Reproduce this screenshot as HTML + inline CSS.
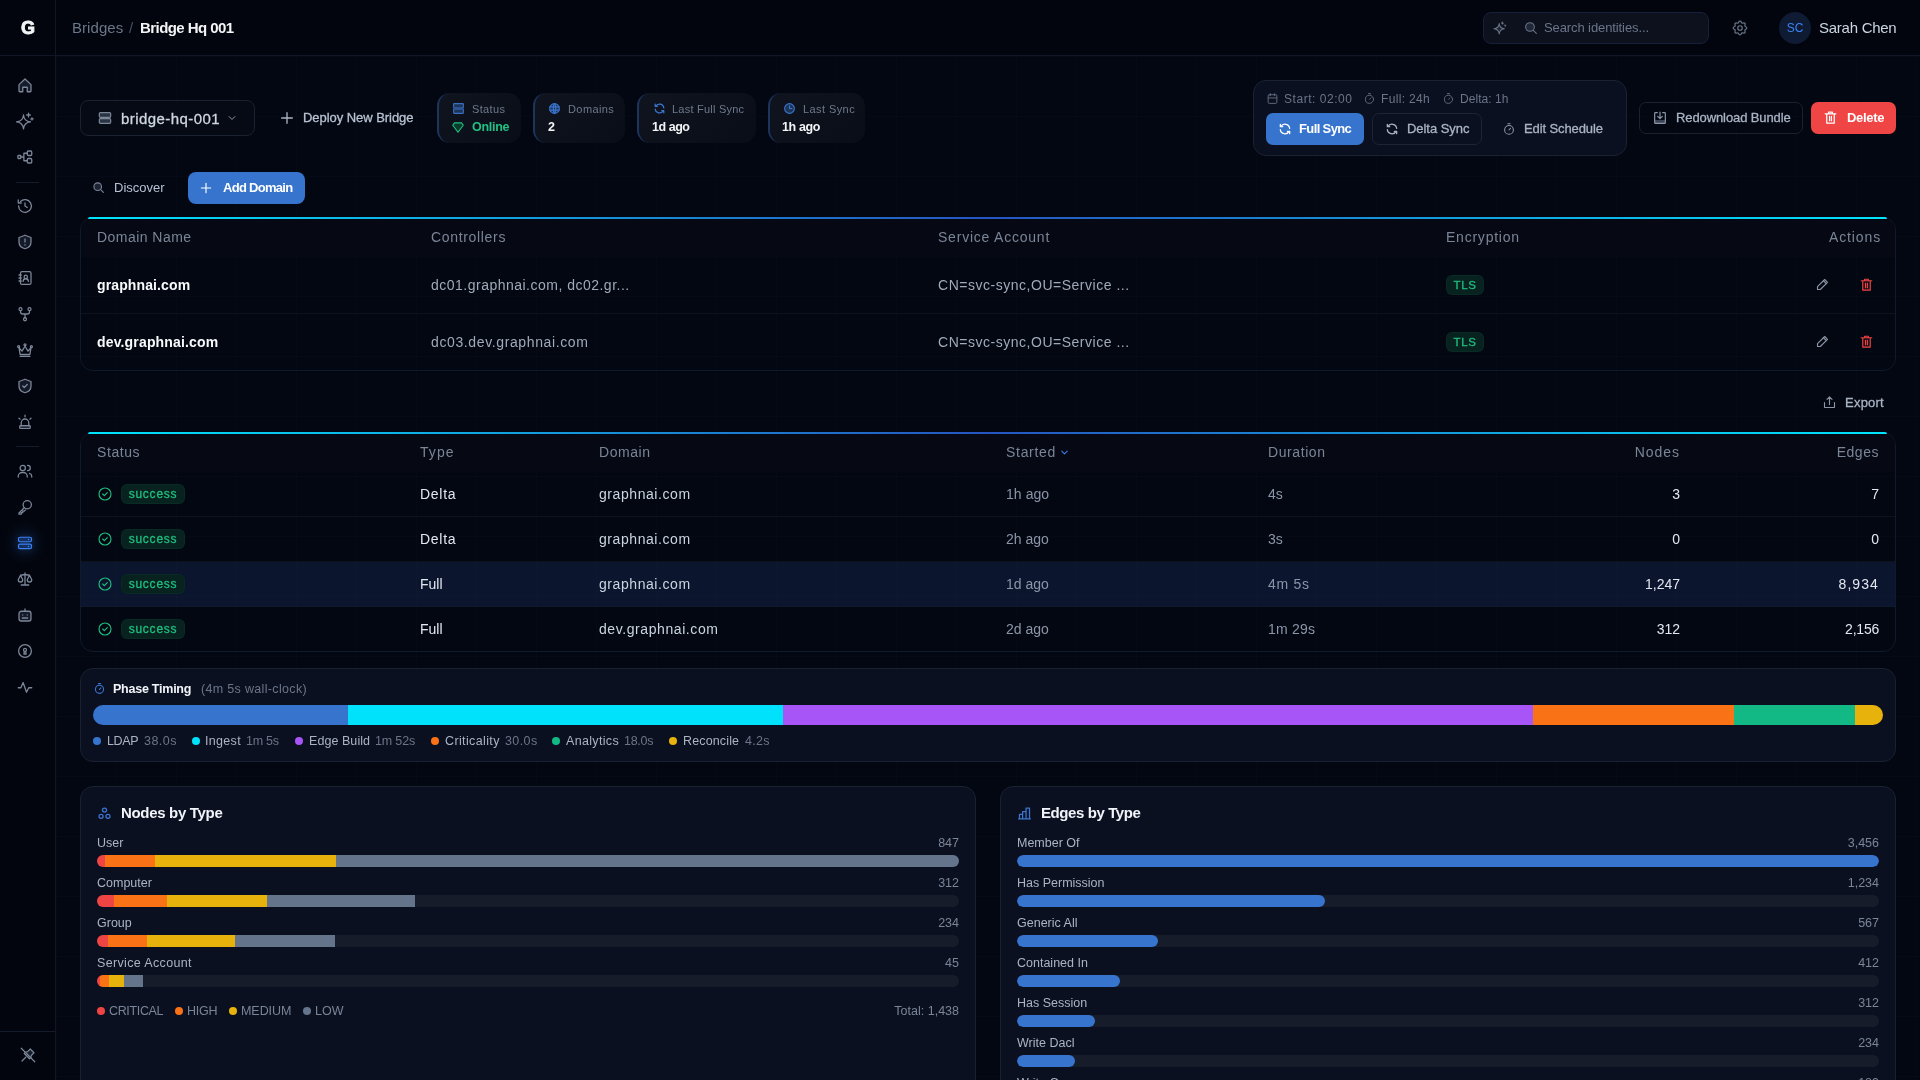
<!DOCTYPE html>
<html><head><meta charset="utf-8">
<style>
*{box-sizing:border-box;margin:0;padding:0}
html,body{width:1920px;height:1080px;overflow:hidden}
body{background:#030712;font-family:"Liberation Sans",sans-serif;color:#e5e7eb;position:relative}
.grid{position:absolute;left:56px;top:56px;right:0;bottom:0;
background-image:linear-gradient(to right,rgba(148,163,184,0.022) 1px,transparent 1px),linear-gradient(to bottom,rgba(148,163,184,0.022) 1px,transparent 1px);
background-size:60px 60px;background-position:0 0}
.side{position:absolute;left:0;top:0;width:56px;height:1080px;background:#02050d;border-right:1px solid #101625}
.hdr{position:absolute;left:56px;top:0;right:0;height:56px;border-bottom:1px solid #101625;background:#02050d}
svg{position:absolute;overflow:visible}
.si{width:18px;height:18px;fill:none;stroke:#7c879a;stroke-width:1.7;stroke-linecap:round;stroke-linejoin:round}
.t{position:absolute;white-space:nowrap;line-height:1}
.box{position:absolute}

.stat{top:93px;height:50px;border-radius:13px;background:linear-gradient(135deg,#10141f,#090d17);border-left:2px solid #1c355c}
.card{border-radius:13px;background:transparent;border:1px solid #0f1a2d}
.thbg{border-radius:12px 12px 0 0;background:#060913}
.topline{height:2px;border-radius:2px 2px 0 0;background:linear-gradient(90deg,#00e5fc,#2755c0 50%,#00e5fc)}
.th{font-size:14px;color:#7a8598}
.td{font-size:14px;color:#a0aab9}
.badge{border-radius:6px;background:#08221f;box-shadow:inset 0 0 0 1px rgba(16,185,129,0.06)}
.m{-webkit-text-stroke:0.3px currentColor}
</style></head><body><div id="root" style="position:absolute;left:0;top:0;width:1920px;height:1080px;overflow:hidden;will-change:transform">
<div class="grid"></div>
<div class="side"></div>
<div class="hdr"></div>
<div class="box" style="left:0;top:55px;width:56px;height:1px;background:#101625"></div>
<!-- logo -->
<div class="t" style="left:21px;top:19px;font-size:18px;font-weight:bold;color:#f3f4f6;-webkit-text-stroke:0.9px #f3f4f6">G</div>
<!-- sidebar icons -->
<svg class="si" style="left:16px;top:76px" viewBox="0 0 24 24"><path d="M4 11.5L12 4l8 7.5V20a1 1 0 0 1-1 1h-4v-6h-6v6H5a1 1 0 0 1-1-1z" fill="#161c2a"/></svg>
<svg class="si" style="left:16px;top:112px" viewBox="0 0 24 24"><path d="M10 4Q10.8 12.5 19.3 13.3Q10.8 14.1 10 22.6Q9.2 14.1 0.7 13.3Q9.2 12.5 10 4z"/><path d="M16.7 1.5v5M14.2 4h5M21.3 7.8v3M19.8 9.3h3"/></svg>
<svg class="si" style="left:16px;top:148px" viewBox="0 0 24 24"><rect x="2.5" y="10" width="4" height="4" rx="1"/><rect x="15" y="4" width="6" height="6" rx="1.5"/><rect x="15" y="14" width="6" height="6" rx="1.5"/><path d="M6.5 12h4M10.5 7v10M10.5 7h4.5M10.5 17h4.5"/></svg>
<div class="box" style="left:16px;top:182px;width:23px;height:1px;background:#141b2a"></div>
<svg class="si" style="left:16px;top:197px" viewBox="0 0 24 24"><path d="M3.5 12a8.5 8.5 0 1 0 2.5-6"/><path d="M3 4v4h4"/><path d="M12 8v4l3 2"/></svg>
<svg class="si" style="left:16px;top:233px" viewBox="0 0 24 24"><path d="M12 3l8 3v6c0 5-3.5 8-8 9-4.5-1-8-4-8-9V6z" fill="#141a28"/><path d="M12 8v4M12 15.5v.5"/></svg>
<svg class="si" style="left:16px;top:269px" viewBox="0 0 24 24"><rect x="6" y="3.5" width="14" height="17" rx="2"/><circle cx="13" cy="10.5" r="2.2"/><path d="M9.5 16.5a3.5 3.5 0 0 1 7 0M4 8h3M4 12h3M4 16h3"/></svg>
<svg class="si" style="left:16px;top:305px" viewBox="0 0 24 24"><circle cx="6" cy="5.5" r="2"/><circle cx="18" cy="5.5" r="2"/><circle cx="12" cy="19" r="2"/><path d="M6 7.5v1.5a3 3 0 0 0 3 3h6a3 3 0 0 0 3-3V7.5M12 12v5"/></svg>
<svg class="si" style="left:16px;top:341px" viewBox="0 0 24 24"><path d="M4 9l4 4.5 4-6.5 4 6.5 4-4.5-1.5 9h-13z"/><circle cx="12" cy="5" r="1.3"/><circle cx="3.5" cy="7.5" r="1.3"/><circle cx="20.5" cy="7.5" r="1.3"/><path d="M5.5 20.5h13"/></svg>
<svg class="si" style="left:16px;top:377px" viewBox="0 0 24 24"><path d="M12 3l8 3v6c0 5-3.5 8-8 9-4.5-1-8-4-8-9V6z" fill="#141a28"/><path d="M9 12l2 2 4-4"/></svg>
<svg class="si" style="left:16px;top:413px" viewBox="0 0 24 24"><path d="M7 17v-4a5 5 0 0 1 10 0v4"/><rect x="5" y="17" width="14" height="3.5" rx="1"/><path d="M12 3v2M4 7l1.5 1.2M20 7l-1.5 1.2"/></svg>
<div class="box" style="left:16px;top:446px;width:23px;height:1px;background:#141b2a"></div>
<svg class="si" style="left:16px;top:462px" viewBox="0 0 24 24"><circle cx="9" cy="8" r="3.5"/><path d="M3 20v-1a5 5 0 0 1 5-5h2a5 5 0 0 1 5 5v1M15.5 4.5a3.5 3.5 0 0 1 0 7M21 20v-1a4 4 0 0 0-3-3.8"/></svg>
<svg class="si" style="left:16px;top:498px" viewBox="0 0 24 24"><circle cx="15" cy="9" r="5.5"/><path d="M11 13l-7 7v1.5h3v-2h2v-2h2l1.5-1.5"/></svg>
<div class="box" style="left:3px;top:521px;width:44px;height:44px;border-radius:50%;background:radial-gradient(circle,rgba(59,130,246,0.10) 0%,rgba(59,130,246,0.04) 45%,transparent 70%)"></div>
<svg class="si" style="left:16px;top:534px;stroke:#3b82f6;stroke-width:1.6;filter:drop-shadow(0 0 5px rgba(59,130,246,.45))" viewBox="0 0 24 24"><rect x="3.3" y="4.3" width="17.4" height="6" rx="2.2" fill="rgba(59,130,246,.18)"/><rect x="3.3" y="13.6" width="17.4" height="6" rx="2.2" fill="rgba(59,130,246,.18)"/><path d="M16.7 7.3h.01M16.7 16.6h.01" stroke-width="2.2"/></svg>
<svg class="si" style="left:16px;top:570px" viewBox="0 0 24 24"><path d="M7 20h10M6 7l6-1 6 1M12 4v16M9 13l-3-6-3 6a3 3 0 0 0 6 0M21 13l-3-6-3 6a3 3 0 0 0 6 0"/></svg>
<svg class="si" style="left:16px;top:606px" viewBox="0 0 24 24"><rect x="4" y="7" width="16" height="13" rx="3" fill="#141a28"/><path d="M12 4v3M9 12v.01M15 12v.01M8.5 16h7"/></svg>
<svg class="si" style="left:16px;top:642px" viewBox="0 0 24 24"><circle cx="12" cy="12" r="8.5"/><circle cx="12" cy="10.5" r="2"/><path d="M11.2 12.5l-.7 3.5h3l-.7-3.5"/></svg>
<svg class="si" style="left:16px;top:678px" viewBox="0 0 24 24"><path d="M3 13h3.5l3-7 4.5 13 3-6H21"/></svg>
<div class="box" style="left:0;top:1031px;width:55px;height:1px;background:#141b2a"></div>
<svg class="si" style="left:19px;top:1046px;width:18px;height:18px;stroke-width:1.6" viewBox="0 0 24 24"><path d="M15 4l5 5-3.5 3.5-.8 2.8-1.7 1.7-7-7 1.7-1.7 2.8-.8z" fill="#161d2b"/><path d="M3 3l18 18M9 15l-5 5"/></svg>
<!-- breadcrumb -->
<div class="t" style="left:72px;top:19.5px;font-size:15px;color:#6b778a;letter-spacing:0.06px">Bridges</div>
<div class="t" style="left:129px;top:19.5px;font-size:15px;color:#475163">/</div>
<div class="t" style="left:140px;top:19.5px;font-size:15px;color:#f3f4f6;font-weight:bold;letter-spacing:-0.56px">Bridge Hq 001</div>
<!-- search -->
<div class="box" style="left:1483px;top:12px;width:226px;height:32px;border-radius:8px;background:#0c111d;border:1px solid #15213a"></div>
<svg class="si" style="left:1492px;top:20px;width:16px;height:16px;stroke:#6b7588;stroke-width:1.6" viewBox="0 0 24 24"><path d="M10.8 5.4Q11.6 12.4 18.6 13.2Q11.6 14 10.8 21Q10 14 3 13.2Q10 12.4 10.8 5.4z" fill="#1e2634"/><path d="M15.75 3l1.3 1.8-1.3 1.8-1.3-1.8zM19.8 7.3l1 1.3-1 1.3-1-1.3z" fill="#6b7588" stroke-width="1"/></svg>
<svg class="si" style="left:1523px;top:20px;width:16px;height:16px;stroke:#6b7588;stroke-width:1.6" viewBox="0 0 24 24"><circle cx="10.5" cy="10.5" r="6.5" fill="#1f2836"/><path d="M15.5 15.5L20 20"/></svg>
<div class="t" style="left:1544px;top:20.5px;font-size:13px;color:#6b7588;letter-spacing:-0.10px">Search identities...</div>
<svg class="si" style="left:1731px;top:19px;width:18px;height:18px;stroke:#6b7588;stroke-width:1.6" viewBox="0 0 24 24"><path d="M10.3 4.3c.4-1.8 3-1.8 3.4 0a1.7 1.7 0 0 0 2.6 1.1c1.5-.9 3.3.8 2.4 2.4a1.7 1.7 0 0 0 1 2.5c1.8.4 1.8 3 0 3.4a1.7 1.7 0 0 0-1 2.6c.9 1.5-.9 3.3-2.4 2.4a1.7 1.7 0 0 0-2.6 1c-.4 1.8-3 1.8-3.4 0a1.7 1.7 0 0 0-2.5-1c-1.6.9-3.3-.9-2.4-2.4a1.7 1.7 0 0 0-1.1-2.6c-1.8-.4-1.8-3 0-3.4a1.7 1.7 0 0 0 1.1-2.5c-.9-1.6.8-3.3 2.4-2.4a1.7 1.7 0 0 0 2.5-1.1z"/><circle cx="12" cy="12" r="3"/></svg>
<div class="box" style="left:1779px;top:12px;width:32px;height:32px;border-radius:50%;background:#0e1b33"></div>
<div class="t" style="left:1779px;top:22px;width:32px;text-align:center;font-size:12px;color:#3b82f6">SC</div>
<div class="t" style="left:1819px;top:19.5px;font-size:15px;color:#cbd5e1;letter-spacing:-0.26px">Sarah Chen</div>

<!-- toolbar -->
<div class="box" style="left:80px;top:100px;width:175px;height:36px;border-radius:8px;border:1px solid #1a2130;background:#060a14"></div>
<svg class="si" style="left:97px;top:110px;width:16px;height:16px;stroke:#7c879a;stroke-width:1.8" viewBox="0 0 24 24"><rect x="3.5" y="4" width="17" height="7" rx="1.5" fill="#2a3344"/><rect x="3.5" y="13" width="17" height="7" rx="1.5" fill="#2a3344"/></svg>
<div class="t m" style="left:121px;top:110.5px;font-size:15px;color:#cfd6e2;;letter-spacing:0.44px">bridge-hq-001</div>
<svg class="si" style="left:226px;top:112px;width:12px;height:12px;stroke:#8b95a7;stroke-width:2" viewBox="0 0 24 24"><path d="M6 9l6 6 6-6"/></svg>
<svg class="si" style="left:279px;top:110px;width:16px;height:16px;stroke:#aab4c4;stroke-width:2" viewBox="0 0 24 24"><path d="M12 4v16M4 12h16"/></svg>
<div class="t m" style="left:303px;top:110.8px;font-size:13px;color:#b8c2d2;;letter-spacing:-0.05px">Deploy New Bridge</div>

<!-- stat cards -->
<div class="box stat" style="left:437px;width:84px"></div>
<div class="box stat" style="left:533px;width:92px"></div>
<div class="box stat" style="left:637px;width:119px"></div>
<div class="box stat" style="left:768px;width:97px"></div>
<svg class="si" style="left:452px;top:102px;width:13px;height:13px;stroke:#3b6fc4;stroke-width:2" viewBox="0 0 24 24"><rect x="3" y="3" width="18" height="8" rx="1" fill="#1d3558"/><rect x="3" y="13" width="18" height="8" rx="1" fill="#1d3558"/></svg>
<div class="t" style="left:472px;top:103.5px;font-size:11px;color:#6e798c;letter-spacing:0.34px">Status</div>
<svg class="si" style="left:451px;top:120px;width:14px;height:14px;stroke:#1fbf7f;stroke-width:2" viewBox="0 0 24 24"><path d="M3 9l9 12 9-12-3-4H6z" fill="#0c3a2c"/></svg>
<div class="t" style="left:472px;top:120.5px;font-size:12.5px;color:#22c083;font-weight:bold;letter-spacing:-0.28px">Online</div>
<svg class="si" style="left:548px;top:102px;width:13px;height:13px;stroke:#3b75d0;stroke-width:2" viewBox="0 0 24 24"><circle cx="12" cy="12" r="9" fill="#1d3558"/><path d="M3.5 9h17M3.5 15h17M12 3c-3 3-3 15 0 18M12 3c3 3 3 15 0 18"/></svg>
<div class="t" style="left:568px;top:103.5px;font-size:11px;color:#6e798c;letter-spacing:0.41px">Domains</div>
<div class="t" style="left:548px;top:120.5px;font-size:12.5px;color:#f3f4f6;font-weight:bold">2</div>
<svg class="si" style="left:653px;top:102px;width:13px;height:13px;stroke:#3b75d0;stroke-width:2.2" viewBox="0 0 24 24"><path d="M20 11A8 8 0 0 0 5 8M4 4v4h4M4 13a8 8 0 0 0 15 3M20 20v-4h-4"/></svg>
<div class="t" style="left:672px;top:103.5px;font-size:11px;color:#6e798c;letter-spacing:0.23px">Last Full Sync</div>
<div class="t" style="left:652px;top:120.5px;font-size:12.5px;color:#f3f4f6;font-weight:bold;letter-spacing:-0.46px">1d ago</div>
<svg class="si" style="left:783px;top:102px;width:13px;height:13px;stroke:#3b75d0;stroke-width:2" viewBox="0 0 24 24"><circle cx="12" cy="12" r="9" fill="#1d3558"/><path d="M12 7v5h4"/></svg>
<div class="t" style="left:803px;top:103.5px;font-size:11px;color:#6e798c;letter-spacing:0.42px">Last Sync</div>
<div class="t" style="left:782px;top:120.5px;font-size:12.5px;color:#f3f4f6;font-weight:bold;letter-spacing:-0.36px">1h ago</div>

<!-- schedule box -->
<div class="box" style="left:1253px;top:80px;width:374px;height:76px;border-radius:13px;background:#0b1020;border:1px solid #1b2232"></div>
<svg class="si" style="left:1266px;top:92px;width:13px;height:13px;stroke:#5f6a7d;stroke-width:1.8" viewBox="0 0 24 24"><rect x="4" y="5" width="16" height="16" rx="2"/><path d="M16 3v4M8 3v4M4 11h16"/></svg>
<div class="t" style="left:1284px;top:93px;font-size:12px;color:#6b7588;letter-spacing:0.54px">Start: 02:00</div>
<svg class="si" style="left:1363px;top:92px;width:13px;height:13px;stroke:#5f6a7d;stroke-width:1.8" viewBox="0 0 24 24"><circle cx="12" cy="13.5" r="7.5"/><path d="M12 13.5l2.5-2.5M10 3h4"/></svg>
<div class="t" style="left:1381px;top:93px;font-size:12px;color:#6b7588;letter-spacing:0.33px">Full: 24h</div>
<svg class="si" style="left:1442px;top:92px;width:13px;height:13px;stroke:#5f6a7d;stroke-width:1.8" viewBox="0 0 24 24"><circle cx="12" cy="13.5" r="7.5"/><path d="M12 13.5l2.5-2.5M10 3h4"/></svg>
<div class="t" style="left:1460px;top:93px;font-size:12px;color:#6b7588;letter-spacing:0.04px">Delta: 1h</div>
<div class="box" style="left:1266px;top:113px;width:98px;height:32px;border-radius:7px;background:#3674cd"></div>
<svg class="si" style="left:1278px;top:122px;width:14px;height:14px;stroke:#fff;stroke-width:2.2" viewBox="0 0 24 24"><path d="M20 11A8 8 0 0 0 5 8M4 4v4h4M4 13a8 8 0 0 0 15 3M20 20v-4h-4"/></svg>
<div class="t" style="left:1299px;top:121.5px;font-size:13px;color:#fff;font-weight:bold;letter-spacing:-0.62px">Full Sync</div>
<div class="box" style="left:1372px;top:113px;width:110px;height:32px;border-radius:7px;border:1px solid #1d2434"></div>
<svg class="si" style="left:1385px;top:122px;width:14px;height:14px;stroke:#aab4c4;stroke-width:2.2" viewBox="0 0 24 24"><path d="M20 11A8 8 0 0 0 5 8M4 4v4h4M4 13a8 8 0 0 0 15 3M20 20v-4h-4"/></svg>
<div class="t m" style="left:1407px;top:121.5px;font-size:13px;color:#aab4c4;;letter-spacing:-0.05px">Delta Sync</div>
<svg class="si" style="left:1502px;top:122px;width:14px;height:14px;stroke:#8b95a7;stroke-width:1.8" viewBox="0 0 24 24"><circle cx="12" cy="13.5" r="7.5"/><path d="M12 13.5l2.5-2.5M10 3h4"/></svg>
<div class="t m" style="left:1524px;top:121.5px;font-size:13px;color:#aab4c4;;letter-spacing:-0.10px">Edit Schedule</div>
<!-- redownload / delete -->
<div class="box" style="left:1639px;top:102px;width:164px;height:32px;border-radius:7px;border:1px solid #1a2130"></div>
<svg class="si" style="left:1652px;top:110px;width:16px;height:16px;stroke:#8b95a7;stroke-width:1.8" viewBox="0 0 24 24"><rect x="4" y="15" width="16" height="5" fill="#3a4456" stroke="none"/><path d="M8 4H5a1 1 0 0 0-1 1v14a1 1 0 0 0 1 1h14a1 1 0 0 0 1-1V5a1 1 0 0 0-1-1h-3M12 3v10M8.5 9.5L12 13l3.5-3.5"/></svg>
<div class="t m" style="left:1676px;top:110.5px;font-size:13px;color:#aab4c4;;letter-spacing:-0.10px">Redownload Bundle</div>
<div class="box" style="left:1811px;top:102px;width:85px;height:32px;border-radius:7px;background:#ef4545"></div>
<svg class="si" style="left:1823px;top:110px;width:15px;height:15px;stroke:#fff;stroke-width:2" viewBox="0 0 24 24"><path d="M3.5 6h17M6 6v15h12V6M9 6V3.5h6V6M10.5 10v7M13.5 10v7" fill="rgba(239,68,68,0.12)"/></svg>
<div class="t" style="left:1847px;top:110.5px;font-size:13px;color:#fff;font-weight:bold;letter-spacing:-0.30px">Delete</div>

<!-- discover / add domain -->
<svg class="si" style="left:92px;top:180.5px;width:13px;height:13px;stroke:#7c879a;stroke-width:2" viewBox="0 0 24 24"><circle cx="10.5" cy="10.5" r="7" fill="#1c2333"/><path d="M16 16l5 5"/></svg>
<div class="t" style="left:114px;top:180.5px;font-size:13px;color:#b8c2d2">Discover</div>
<div class="box" style="left:188px;top:172px;width:117px;height:32px;border-radius:8px;background:#3674cd"></div>
<svg class="si" style="left:199px;top:180.5px;width:14px;height:14px;stroke:#fff;stroke-width:2" viewBox="0 0 24 24"><path d="M12 4v16M4 12h16"/></svg>
<div class="t" style="left:223px;top:180.5px;font-size:13px;color:#fff;font-weight:bold;letter-spacing:-0.72px">Add Domain</div>
<!-- domain table -->
<div class="box card" style="left:80px;top:217px;width:1816px;height:154px"></div>
<div class="box thbg" style="left:81px;top:218px;width:1814px;height:39px"></div>
<div class="box topline" style="left:88px;top:217px;width:1799px"></div>
<div class="t th" style="left:97px;top:230px;letter-spacing:0.46px">Domain Name</div>
<div class="t th" style="left:431px;top:230px;letter-spacing:0.67px">Controllers</div>
<div class="t th" style="left:938px;top:230px;letter-spacing:0.78px">Service Account</div>
<div class="t th" style="left:1446px;top:230px;letter-spacing:0.77px">Encryption</div>
<div class="t th" style="left:1829px;top:230px;letter-spacing:0.87px">Actions</div>
<div class="box" style="left:81px;top:313px;width:1814px;height:1px;background:#0c121e"></div>
<div class="t" style="left:97px;top:278px;font-size:14px;font-weight:bold;color:#f8fafc;letter-spacing:0.12px">graphnai.com</div>
<div class="t td" style="left:431px;top:278px;letter-spacing:0.49px">dc01.graphnai.com, dc02.gr...</div>
<div class="t td" style="left:938px;top:278px;letter-spacing:0.52px">CN=svc-sync,OU=Service ...</div>
<div class="box badge" style="left:1446px;top:275px;width:38px;height:20px"></div>
<div class="t m" style="left:1446px;top:280px;width:38px;text-align:center;font-size:11.5px;color:#1fbf7f;letter-spacing:0.66px">TLS</div>
<div class="t" style="left:97px;top:335px;font-size:14px;font-weight:bold;color:#f8fafc;letter-spacing:0.16px">dev.graphnai.com</div>
<div class="t td" style="left:431px;top:335px;letter-spacing:0.62px">dc03.dev.graphnai.com</div>
<div class="t td" style="left:938px;top:335px;letter-spacing:0.52px">CN=svc-sync,OU=Service ...</div>
<div class="box badge" style="left:1446px;top:332px;width:38px;height:20px"></div>
<div class="t m" style="left:1446px;top:337px;width:38px;text-align:center;font-size:11.5px;color:#1fbf7f;letter-spacing:0.66px">TLS</div>
<svg class="si" style="left:1815px;top:277px;width:15px;height:15px;stroke:#8b95a7;stroke-width:1.8" viewBox="0 0 24 24"><path d="M4 20v-4.5L15.5 4l4.5 4.5L8.5 20z"/><path d="M13.5 6l4.5 4.5"/></svg>
<svg class="si" style="left:1859px;top:277px;width:15px;height:15px;stroke:#ef4444;stroke-width:1.8" viewBox="0 0 24 24"><path d="M3.5 6h17M6 6v15h12V6M9 6V3.5h6V6M10.5 10v7M13.5 10v7" fill="rgba(239,68,68,0.12)"/></svg>
<svg class="si" style="left:1815px;top:334px;width:15px;height:15px;stroke:#8b95a7;stroke-width:1.8" viewBox="0 0 24 24"><path d="M4 20v-4.5L15.5 4l4.5 4.5L8.5 20z"/><path d="M13.5 6l4.5 4.5"/></svg>
<svg class="si" style="left:1859px;top:334px;width:15px;height:15px;stroke:#ef4444;stroke-width:1.8" viewBox="0 0 24 24"><path d="M3.5 6h17M6 6v15h12V6M9 6V3.5h6V6M10.5 10v7M13.5 10v7" fill="rgba(239,68,68,0.12)"/></svg>

<!-- export -->
<svg class="si" style="left:1822px;top:395px;width:15px;height:15px;stroke:#8b95a7;stroke-width:1.8" viewBox="0 0 24 24"><path d="M4 12v7a1 1 0 0 0 1 1h14a1 1 0 0 0 1-1v-7M12 15V3M8 7l4-4 4 4"/></svg>
<div class="t m" style="left:1845px;top:396px;font-size:13px;color:#aab4c4;letter-spacing:0.23px">Export</div>

<!-- sync history table -->
<div class="box card" style="left:80px;top:432px;width:1816px;height:220px"></div>
<div class="box thbg" style="left:81px;top:433px;width:1814px;height:39px"></div>
<div class="box topline" style="left:88px;top:432px;width:1799px"></div>
<div class="t th" style="left:97px;top:445px;letter-spacing:0.58px">Status</div>
<div class="t th" style="left:420px;top:445px;letter-spacing:1.05px">Type</div>
<div class="t th" style="left:599px;top:445px;letter-spacing:0.57px">Domain</div>
<div class="t th" style="left:1006px;top:445px;letter-spacing:0.70px">Started</div>
<svg class="si" style="left:1059px;top:447px;width:11px;height:11px;stroke:#3b82f6;stroke-width:2.2" viewBox="0 0 24 24"><path d="M6 9l6 6 6-6"/></svg>
<div class="t th" style="left:1268px;top:445px;letter-spacing:0.58px">Duration</div>
<div class="t th" style="left:1580px;top:445px;width:100px;text-align:right;letter-spacing:0.96px">Nodes</div>
<div class="t th" style="left:1779px;top:445px;width:100px;text-align:right;letter-spacing:0.53px">Edges</div>
<div class="box" style="left:81px;top:516px;width:1814px;height:1px;background:#0c121e"></div>
<div class="box" style="left:81px;top:561px;width:1814px;height:1px;background:#0c121e"></div>
<div class="box" style="left:81px;top:562px;width:1814px;height:44px;background:rgba(30,57,111,0.3)"></div>
<div class="box" style="left:81px;top:606px;width:1814px;height:1px;background:#0f1a2c"></div>
<svg class="si" style="left:97px;top:486px;width:16px;height:16px;stroke:#1fbf7f;stroke-width:1.7" viewBox="0 0 24 24"><circle cx="12" cy="12" r="9"/><path d="M8.5 12l2.5 2.5 4.5-4.5"/></svg>
<div class="box badge" style="left:121px;top:484px;width:64px;height:20px"></div>
<div class="t m" style="left:121px;top:488px;width:64px;text-align:center;font-size:12px;color:#1fbf7f;letter-spacing:0.77px">success</div>
<div class="t" style="left:420px;top:487px;font-size:14px;color:#e2e8f0;letter-spacing:0.71px">Delta</div>
<div class="t" style="left:599px;top:487px;font-size:14px;color:#cbd5e1;letter-spacing:0.57px">graphnai.com</div>
<div class="t" style="left:1006px;top:487px;font-size:14px;color:#8b95a7;letter-spacing:0.06px">1h ago</div>
<div class="t" style="left:1268px;top:487px;font-size:14px;color:#8b95a7">4s</div>
<div class="t" style="left:1480px;top:487px;width:200px;text-align:right;font-size:14px;color:#e2e8f0">3</div>
<div class="t" style="left:1679px;top:487px;width:200px;text-align:right;font-size:14px;color:#e2e8f0">7</div>
<svg class="si" style="left:97px;top:531px;width:16px;height:16px;stroke:#1fbf7f;stroke-width:1.7" viewBox="0 0 24 24"><circle cx="12" cy="12" r="9"/><path d="M8.5 12l2.5 2.5 4.5-4.5"/></svg>
<div class="box badge" style="left:121px;top:529px;width:64px;height:20px"></div>
<div class="t m" style="left:121px;top:533px;width:64px;text-align:center;font-size:12px;color:#1fbf7f;letter-spacing:0.77px">success</div>
<div class="t" style="left:420px;top:532px;font-size:14px;color:#e2e8f0;letter-spacing:0.71px">Delta</div>
<div class="t" style="left:599px;top:532px;font-size:14px;color:#cbd5e1;letter-spacing:0.57px">graphnai.com</div>
<div class="t" style="left:1006px;top:532px;font-size:14px;color:#8b95a7">2h ago</div>
<div class="t" style="left:1268px;top:532px;font-size:14px;color:#8b95a7">3s</div>
<div class="t" style="left:1480px;top:532px;width:200px;text-align:right;font-size:14px;color:#e2e8f0">0</div>
<div class="t" style="left:1679px;top:532px;width:200px;text-align:right;font-size:14px;color:#e2e8f0">0</div>
<svg class="si" style="left:97px;top:576px;width:16px;height:16px;stroke:#1fbf7f;stroke-width:1.7" viewBox="0 0 24 24"><circle cx="12" cy="12" r="9"/><path d="M8.5 12l2.5 2.5 4.5-4.5"/></svg>
<div class="box badge" style="left:121px;top:574px;width:64px;height:20px"></div>
<div class="t m" style="left:121px;top:578px;width:64px;text-align:center;font-size:12px;color:#1fbf7f;letter-spacing:0.77px">success</div>
<div class="t" style="left:420px;top:577px;font-size:14px;color:#e2e8f0">Full</div>
<div class="t" style="left:599px;top:577px;font-size:14px;color:#cbd5e1;letter-spacing:0.57px">graphnai.com</div>
<div class="t" style="left:1006px;top:577px;font-size:14px;color:#8b95a7">1d ago</div>
<div class="t" style="left:1268px;top:577px;font-size:14px;color:#8b95a7;letter-spacing:0.75px">4m 5s</div>
<div class="t" style="left:1480px;top:577px;width:200px;text-align:right;font-size:14px;color:#e2e8f0">1,247</div>
<div class="t" style="left:1679px;top:577px;width:200px;text-align:right;font-size:14px;color:#e2e8f0;letter-spacing:1.09px">8,934</div>
<svg class="si" style="left:97px;top:621px;width:16px;height:16px;stroke:#1fbf7f;stroke-width:1.7" viewBox="0 0 24 24"><circle cx="12" cy="12" r="9"/><path d="M8.5 12l2.5 2.5 4.5-4.5"/></svg>
<div class="box badge" style="left:121px;top:619px;width:64px;height:20px"></div>
<div class="t m" style="left:121px;top:623px;width:64px;text-align:center;font-size:12px;color:#1fbf7f;letter-spacing:0.77px">success</div>
<div class="t" style="left:420px;top:622px;font-size:14px;color:#e2e8f0">Full</div>
<div class="t" style="left:599px;top:622px;font-size:14px;color:#cbd5e1;letter-spacing:0.58px">dev.graphnai.com</div>
<div class="t" style="left:1006px;top:622px;font-size:14px;color:#8b95a7">2d ago</div>
<div class="t" style="left:1268px;top:622px;font-size:14px;color:#8b95a7;letter-spacing:0.24px">1m 29s</div>
<div class="t" style="left:1480px;top:622px;width:200px;text-align:right;font-size:14px;color:#e2e8f0">312</div>
<div class="t" style="left:1679px;top:622px;width:200px;text-align:right;font-size:14px;color:#e2e8f0;letter-spacing:-0.23px">2,156</div>
<div class="box" style="left:80px;top:668px;width:1816px;height:94px;border-radius:13px;background:#0b1020;border:1px solid #1a2130"></div>
<svg class="si" style="left:93px;top:682px;width:13px;height:13px;stroke:#3b75d0;stroke-width:2" viewBox="0 0 24 24"><circle cx="12" cy="13.5" r="7.5"/><path d="M12 13.5l2.5-2.5M10 3h4"/></svg>
<div class="t" style="left:113px;top:682.5px;font-size:12.5px;font-weight:bold;color:#f1f5f9;letter-spacing:-0.24px">Phase Timing</div>
<div class="t" style="left:201px;top:682.5px;font-size:12.5px;color:#6b7588;letter-spacing:0.33px">(4m 5s wall-clock)</div>
<div class="box" style="left:93px;top:705px;width:1790px;height:20px;border-radius:10px;overflow:hidden;display:flex"><div style="width:255px;height:20px;background:#3674cd"></div><div style="width:435px;height:20px;background:#00e1fb"></div><div style="width:750px;height:20px;background:#a855f7"></div><div style="width:201px;height:20px;background:#f97316"></div><div style="width:121px;height:20px;background:#13b985"></div><div style="width:28px;height:20px;background:#e8b20c"></div></div>
<div class="box" style="left:93px;top:737px;width:8px;height:8px;border-radius:50%;background:#3674cd"></div>
<div class="t" style="left:107px;top:734.5px;font-size:12.5px;color:#aab4c4;letter-spacing:-0.39px">LDAP</div>
<div class="t" style="left:144px;top:734.5px;font-size:12.5px;color:#6b7588;letter-spacing:0.45px">38.0s</div>
<div class="box" style="left:192px;top:737px;width:8px;height:8px;border-radius:50%;background:#00e1fb"></div>
<div class="t" style="left:205px;top:734.5px;font-size:12.5px;color:#aab4c4;letter-spacing:0.31px">Ingest</div>
<div class="t" style="left:246px;top:734.5px;font-size:12.5px;color:#6b7588;letter-spacing:-0.26px">1m 5s</div>
<div class="box" style="left:295px;top:737px;width:8px;height:8px;border-radius:50%;background:#a855f7"></div>
<div class="t" style="left:309px;top:734.5px;font-size:12.5px;color:#aab4c4;letter-spacing:0.06px">Edge Build</div>
<div class="t" style="left:375px;top:734.5px;font-size:12.5px;color:#6b7588;letter-spacing:-0.16px">1m 52s</div>
<div class="box" style="left:431px;top:737px;width:8px;height:8px;border-radius:50%;background:#f97316"></div>
<div class="t" style="left:445px;top:734.5px;font-size:12.5px;color:#aab4c4;letter-spacing:0.37px">Criticality</div>
<div class="t" style="left:505px;top:734.5px;font-size:12.5px;color:#6b7588;letter-spacing:0.40px">30.0s</div>
<div class="box" style="left:552px;top:737px;width:8px;height:8px;border-radius:50%;background:#13b985"></div>
<div class="t" style="left:566px;top:734.5px;font-size:12.5px;color:#aab4c4;letter-spacing:0.33px">Analytics</div>
<div class="t" style="left:624px;top:734.5px;font-size:12.5px;color:#6b7588;letter-spacing:-0.27px">18.0s</div>
<div class="box" style="left:669px;top:737px;width:8px;height:8px;border-radius:50%;background:#e8b20c"></div>
<div class="t" style="left:683px;top:734.5px;font-size:12.5px;color:#aab4c4;letter-spacing:0.14px">Reconcile</div>
<div class="t" style="left:745px;top:734.5px;font-size:12.5px;color:#6b7588;letter-spacing:0.25px">4.2s</div>
<div class="box" style="left:80px;top:786px;width:896px;height:320px;border-radius:13px;background:#0b1020;border:1px solid #1a2130"></div>
<svg class="si" style="left:97px;top:806px;width:15px;height:15px;stroke:#3b75d0;stroke-width:2" viewBox="0 0 24 24"><circle cx="12" cy="6.5" r="3.3"/><circle cx="6.5" cy="16.5" r="3.3"/><circle cx="17.5" cy="16.5" r="3.3"/></svg>
<div class="t" style="left:121px;top:804.5px;font-size:15px;font-weight:bold;color:#f1f5f9;letter-spacing:-0.32px">Nodes by Type</div>
<div class="t" style="left:97px;top:837px;font-size:12.5px;color:#aab4c4">User</div>
<div class="t" style="left:759px;top:837px;width:200px;text-align:right;font-size:12.5px;color:#7a8598">847</div>
<div class="box" style="left:97px;top:855px;width:862px;height:12px;border-radius:6px;background:#161c2a;overflow:hidden;display:flex"><div style="width:8px;height:12px;background:#ef4444"></div><div style="width:50px;height:12px;background:#f97316"></div><div style="width:181px;height:12px;background:#e8b20c"></div><div style="width:623px;height:12px;background:#64748b"></div></div>
<div class="t" style="left:97px;top:877px;font-size:12.5px;color:#aab4c4">Computer</div>
<div class="t" style="left:759px;top:877px;width:200px;text-align:right;font-size:12.5px;color:#7a8598">312</div>
<div class="box" style="left:97px;top:895px;width:862px;height:12px;border-radius:6px;background:#161c2a;overflow:hidden;display:flex"><div style="width:17px;height:12px;background:#ef4444"></div><div style="width:53px;height:12px;background:#f97316"></div><div style="width:100px;height:12px;background:#e8b20c"></div><div style="width:148px;height:12px;background:#64748b"></div></div>
<div class="t" style="left:97px;top:917px;font-size:12.5px;color:#aab4c4">Group</div>
<div class="t" style="left:759px;top:917px;width:200px;text-align:right;font-size:12.5px;color:#7a8598">234</div>
<div class="box" style="left:97px;top:935px;width:862px;height:12px;border-radius:6px;background:#161c2a;overflow:hidden;display:flex"><div style="width:11px;height:12px;background:#ef4444"></div><div style="width:39px;height:12px;background:#f97316"></div><div style="width:88px;height:12px;background:#e8b20c"></div><div style="width:100px;height:12px;background:#64748b"></div></div>
<div class="t" style="left:97px;top:957px;font-size:12.5px;color:#aab4c4;letter-spacing:0.35px">Service Account</div>
<div class="t" style="left:759px;top:957px;width:200px;text-align:right;font-size:12.5px;color:#7a8598">45</div>
<div class="box" style="left:97px;top:975px;width:862px;height:12px;border-radius:6px;background:#161c2a;overflow:hidden;display:flex"><div style="width:3px;height:12px;background:#ef4444"></div><div style="width:9px;height:12px;background:#f97316"></div><div style="width:15px;height:12px;background:#e8b20c"></div><div style="width:19px;height:12px;background:#64748b"></div></div>
<div class="box" style="left:97px;top:1007px;width:8px;height:8px;border-radius:50%;background:#ef4444"></div>
<div class="t" style="left:109px;top:1004.5px;font-size:12.5px;color:#7a8598;letter-spacing:-0.34px">CRITICAL</div>
<div class="box" style="left:175px;top:1007px;width:8px;height:8px;border-radius:50%;background:#f97316"></div>
<div class="t" style="left:187px;top:1004.5px;font-size:12.5px;color:#7a8598;letter-spacing:-0.25px">HIGH</div>
<div class="box" style="left:229px;top:1007px;width:8px;height:8px;border-radius:50%;background:#e8b20c"></div>
<div class="t" style="left:241px;top:1004.5px;font-size:12.5px;color:#7a8598;letter-spacing:-0.06px">MEDIUM</div>
<div class="box" style="left:303px;top:1007px;width:8px;height:8px;border-radius:50%;background:#64748b"></div>
<div class="t" style="left:315px;top:1004.5px;font-size:12.5px;color:#7a8598">LOW</div>
<div class="t" style="left:759px;top:1004.5px;width:200px;text-align:right;font-size:12.5px;color:#7a8598">Total: 1,438</div>
<div class="box" style="left:1000px;top:786px;width:896px;height:320px;border-radius:13px;background:#0b1020;border:1px solid #1a2130"></div>
<svg class="si" style="left:1017px;top:806px;width:15px;height:15px;stroke:#3b75d0;stroke-width:2" viewBox="0 0 24 24"><path d="M2.5 20.5h19M4 20.5v-7h5v7M9 20.5V9h5.5v11.5M14.5 20.5V3.5h5.5v17"/></svg>
<div class="t" style="left:1041px;top:804.5px;font-size:15px;font-weight:bold;color:#f1f5f9;letter-spacing:-0.41px">Edges by Type</div>
<div class="t" style="left:1017px;top:837px;font-size:12.5px;color:#aab4c4">Member Of</div>
<div class="t" style="left:1679px;top:837px;width:200px;text-align:right;font-size:12.5px;color:#7a8598">3,456</div>
<div class="box" style="left:1017px;top:855px;width:862px;height:12px;border-radius:6px;background:#161c2a;overflow:hidden"><div style="width:862px;height:12px;border-radius:6px;background:#3674cd"></div></div>
<div class="t" style="left:1017px;top:877px;font-size:12.5px;color:#aab4c4">Has Permission</div>
<div class="t" style="left:1679px;top:877px;width:200px;text-align:right;font-size:12.5px;color:#7a8598">1,234</div>
<div class="box" style="left:1017px;top:895px;width:862px;height:12px;border-radius:6px;background:#161c2a;overflow:hidden"><div style="width:308px;height:12px;border-radius:6px;background:#3674cd"></div></div>
<div class="t" style="left:1017px;top:917px;font-size:12.5px;color:#aab4c4">Generic All</div>
<div class="t" style="left:1679px;top:917px;width:200px;text-align:right;font-size:12.5px;color:#7a8598">567</div>
<div class="box" style="left:1017px;top:935px;width:862px;height:12px;border-radius:6px;background:#161c2a;overflow:hidden"><div style="width:141px;height:12px;border-radius:6px;background:#3674cd"></div></div>
<div class="t" style="left:1017px;top:957px;font-size:12.5px;color:#aab4c4">Contained In</div>
<div class="t" style="left:1679px;top:957px;width:200px;text-align:right;font-size:12.5px;color:#7a8598">412</div>
<div class="box" style="left:1017px;top:975px;width:862px;height:12px;border-radius:6px;background:#161c2a;overflow:hidden"><div style="width:103px;height:12px;border-radius:6px;background:#3674cd"></div></div>
<div class="t" style="left:1017px;top:997px;font-size:12.5px;color:#aab4c4">Has Session</div>
<div class="t" style="left:1679px;top:997px;width:200px;text-align:right;font-size:12.5px;color:#7a8598">312</div>
<div class="box" style="left:1017px;top:1015px;width:862px;height:12px;border-radius:6px;background:#161c2a;overflow:hidden"><div style="width:78px;height:12px;border-radius:6px;background:#3674cd"></div></div>
<div class="t" style="left:1017px;top:1037px;font-size:12.5px;color:#aab4c4">Write Dacl</div>
<div class="t" style="left:1679px;top:1037px;width:200px;text-align:right;font-size:12.5px;color:#7a8598">234</div>
<div class="box" style="left:1017px;top:1055px;width:862px;height:12px;border-radius:6px;background:#161c2a;overflow:hidden"><div style="width:58px;height:12px;border-radius:6px;background:#3674cd"></div></div>
<div class="t" style="left:1017px;top:1077px;font-size:12.5px;color:#aab4c4">Write Owner</div>
<div class="t" style="left:1679px;top:1077px;width:200px;text-align:right;font-size:12.5px;color:#7a8598">189</div>
<div class="box" style="left:1017px;top:1095px;width:862px;height:12px;border-radius:6px;background:#161c2a;overflow:hidden"><div style="width:47px;height:12px;border-radius:6px;background:#3674cd"></div></div>
</div></body></html>
